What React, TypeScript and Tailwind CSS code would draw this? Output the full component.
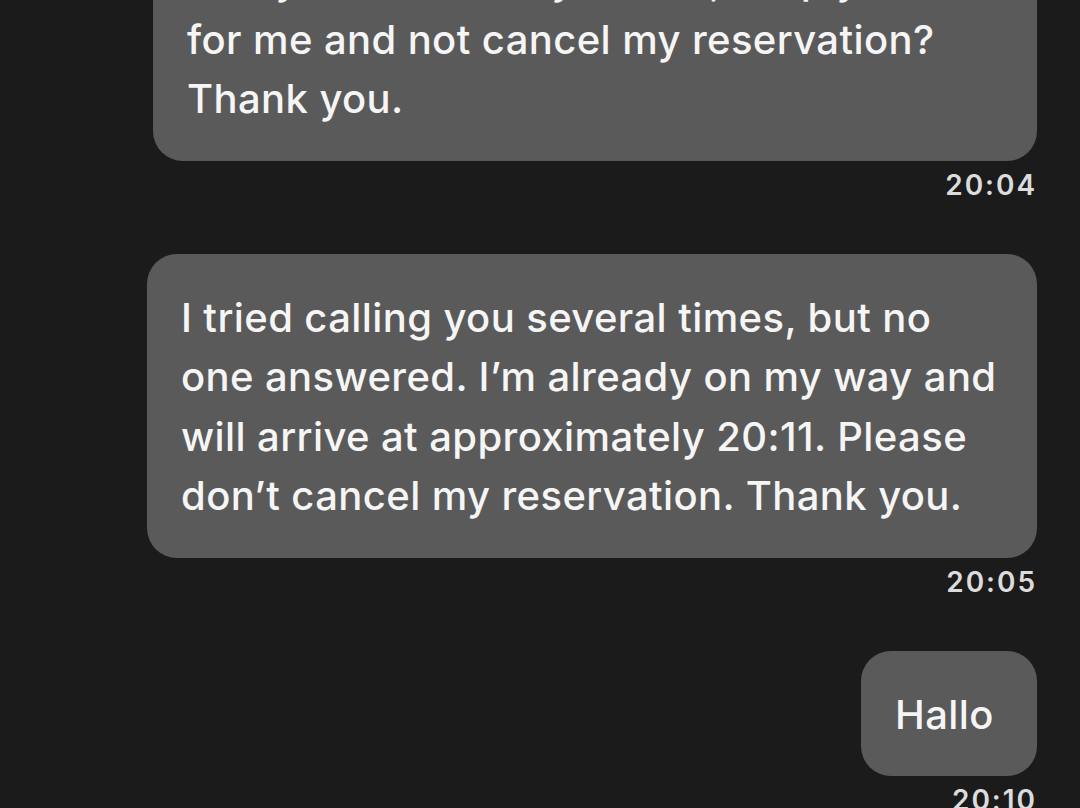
const messages = [
  {
    lines: ["Can you wait for my arrival, simply hold it", "for me and not cancel my reservation?", "Thank you."],
    time: "20:04",
    width: "w-[884px]",
  },
  {
    lines: [
      "I tried calling you several times, but no",
      "one answered. I\u2019m already on my way and",
      "will arrive at approximately 20:11. Please",
      "don\u2019t cancel my reservation. Thank you.",
    ],
    time: "20:05",
    width: "w-[890px]",
  },
  {
    lines: ["Hallo"],
    time: "20:10",
    width: "w-[176px]",
  },
];

function Message({ lines, time, width, first }: { lines: string[]; time: string; width: string; first?: boolean }) {
  return (
    <div className={`flex flex-col items-end ${first ? "-mt-[84px]" : ""}`}>
      <div
        className={`${width} rounded-[30px] bg-[#5a5a5a] pt-[34px] pb-[32px] px-[34px] text-[40px] leading-[59.5px] font-medium tracking-[0.01em] text-[#f5f5f5] whitespace-nowrap`}
      >
        {lines.map((l) => (
          <div key={l}>{l}</div>
        ))}
      </div>
      <div className="mt-[10px] mb-[55px] text-[28px] leading-[28px] font-semibold tracking-[0.07em] text-[#dcdcdc]">
        {time}
      </div>
    </div>
  );
}

export default function App() {
  return (
    <div
      className="h-[808px] w-full overflow-hidden bg-[#1b1b1b]"
      style={{ fontFamily: "Inter, 'Noto Sans', sans-serif" }}
    >
      <div className="flex flex-col items-end pr-[43px]">
        {messages.map((m, i) => (
          <Message key={m.time} {...m} first={i === 0} />
        ))}
      </div>
    </div>
  );
}
